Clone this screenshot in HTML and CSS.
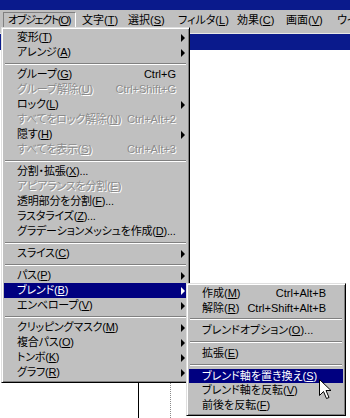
FILE: index.html
```html
<!DOCTYPE html>
<html lang="ja">
<head>
<meta charset="utf-8">
<title>Illustrator メニュー</title>
<link rel="stylesheet" href="styles.css">
</head>
<body>
<div class="app">
  <div class="titlebar"></div>
  <div class="menubar">
    <div class="mb-item open w-obj">オブジェクト(<u>O</u>)</div>
    <div class="mb-item w-txt">文字(<u>T</u>)</div>
    <div class="mb-item w-sel">選択(<u>S</u>)</div>
    <div class="mb-item w-fil">フィルタ(<u>L</u>)</div>
    <div class="mb-item w-eff">効果(<u>C</u>)</div>
    <div class="mb-item w-view">画面(<u>V</u>)</div>
    <div class="mb-item w-win">ウイ</div>
  </div>
  <div class="workspace">
    <div class="doc-title"></div>
    <div class="canvas">
      <div class="art-line"></div>
      <div class="page-line"></div>
    </div>
  </div>
</div>

<div class="menu main-menu">
  <div class="mi"><span>変形(<u>T</u>)</span><span class="arrow"></span></div>
  <div class="mi"><span>アレンジ(<u>A</u>)</span><span class="arrow"></span></div>
  <div class="sep"></div>
  <div class="mi"><span>グループ(<u>G</u>)</span><span class="sc">Ctrl+G</span></div>
  <div class="mi disabled"><span>グループ解除(<u>U</u>)</span><span class="sc">Ctrl+Shift+G</span></div>
  <div class="mi"><span>ロック(<u>L</u>)</span><span class="arrow"></span></div>
  <div class="mi disabled"><span>すべてをロック解除(<u>N</u>)</span><span class="sc">Ctrl+Alt+2</span></div>
  <div class="mi"><span>隠す(<u>H</u>)</span><span class="arrow"></span></div>
  <div class="mi disabled"><span>すべてを表示(<u>S</u>)</span><span class="sc">Ctrl+Alt+3</span></div>
  <div class="sep"></div>
  <div class="mi"><span>分割・拡張(<u>X</u>)...</span></div>
  <div class="mi disabled"><span>アピアランスを分割(<u>E</u>)</span></div>
  <div class="mi"><span>透明部分を分割(<u>F</u>)...</span></div>
  <div class="mi"><span>ラスタライズ(<u>Z</u>)...</span></div>
  <div class="mi"><span>グラデーションメッシュを作成(<u>D</u>)...</span></div>
  <div class="sep"></div>
  <div class="mi"><span>スライス(<u>C</u>)</span><span class="arrow"></span></div>
  <div class="sep"></div>
  <div class="mi"><span>パス(<u>P</u>)</span><span class="arrow"></span></div>
  <div class="mi active"><span>ブレンド(<u>B</u>)</span><span class="arrow"></span></div>
  <div class="mi"><span>エンベロープ(<u>V</u>)</span><span class="arrow"></span></div>
  <div class="sep"></div>
  <div class="mi"><span>クリッピングマスク(<u>M</u>)</span><span class="arrow"></span></div>
  <div class="mi"><span>複合パス(<u>O</u>)</span><span class="arrow"></span></div>
  <div class="mi"><span>トンボ(<u>K</u>)</span><span class="arrow"></span></div>
  <div class="mi"><span>グラフ(<u>R</u>)</span><span class="arrow"></span></div>
</div>

<div class="menu sub-menu">
  <div class="mi"><span>作成(<u>M</u>)</span><span class="sc">Ctrl+Alt+B</span></div>
  <div class="mi"><span>解除(<u>R</u>)</span><span class="sc">Ctrl+Shift+Alt+B</span></div>
  <div class="sep"></div>
  <div class="mi"><span>ブレンドオプション(<u>O</u>)...</span></div>
  <div class="sep"></div>
  <div class="mi"><span>拡張(<u>E</u>)</span></div>
  <div class="sep"></div>
  <div class="mi active"><span>ブレンド軸を置き換え(<u>S</u>)</span></div>
  <div class="mi"><span>ブレンド軸を反転(<u>V</u>)</span></div>
  <div class="mi"><span>前後を反転(<u>F</u>)</span></div>
</div>

<svg class="cursor" width="13" height="21" viewBox="0 0 13 21">
  <path d="M0.5 0.5 L0.5 16.5 L4.5 12.5 L7.5 19.5 L10 18.5 L7 11.5 L12 11.5 Z" fill="#fff" stroke="#000" stroke-width="1"/>
</svg>
</body>
</html>
```

FILE: styles.css
```css
body {
  margin: 0;
  width: 350px;
  height: 418px;
  overflow: hidden;
  position: relative;
  background: #fff;
  font-family: "Liberation Sans", "Noto Sans CJK JP", sans-serif;
  font-size: 11px;
  font-feature-settings: "palt";
  color: #000;
}

.app {
  display: flex;
  flex-direction: column;
  height: 418px;
}

.titlebar {
  height: 10px;
  background: #0a1a8c;
}

.menubar {
  height: 23px;
  box-sizing: border-box;
  background: #c0c0c0;
  display: flex;
  align-items: flex-start;
  padding: 2px 0 0 3px;
  white-space: nowrap;
  overflow: hidden;
}

.mb-item {
  flex: none;
  height: 17px;
  box-sizing: border-box;
  line-height: 15px;
  padding: 0 0 0 5px;
  border: 1px solid transparent;
}

.mb-item.open {
  border-color: #808080 #fff #fff #808080;
}

.w-obj { width: 73px; padding-left: 4px; letter-spacing: -1.3px; }
.w-txt { width: 46px; }
.w-sel { width: 50px; }
.w-fil { width: 59px; }
.w-eff { width: 49px; }
.w-view { width: 51px; }
.w-win { width: 19px; padding-right: 0; }

.workspace {
  flex: 1;
  display: flex;
  flex-direction: column;
  background: #fff;
}

.doc-title {
  height: 16px;
  background: #0a1a8c;
  border-top: 1px solid #e8e8e8;
}

.canvas {
  flex: 1;
  position: relative;
  background: #fff;
}

.art-line {
  position: absolute;
  left: 138px;
  top: 40px;
  bottom: 0;
  width: 1px;
  background: #000;
}

.page-line {
  position: absolute;
  left: 170px;
  top: 40px;
  bottom: 0;
  border-left: 1px dotted #8a8a8a;
}

.menu {
  position: absolute;
  box-sizing: border-box;
  background: #c0c0c0;
  border: 1px solid;
  border-color: #dfdfdf #000 #000 #dfdfdf;
  box-shadow: inset 1px 1px 0 #fff, inset -1px -1px 0 #808080;
  padding: 2px;
}

.main-menu {
  left: 1px;
  top: 27px;
  width: 189px;
  z-index: 2;
}

.sub-menu {
  left: 186px;
  top: 283px;
  width: 160px;
  z-index: 3;
}

.mi {
  display: flex;
  align-items: center;
  height: 14.7px;
  line-height: 14.7px;
  padding: 0 11px 0 13px;
  white-space: nowrap;
}

.main-menu .mi {
  height: 15px;
  line-height: 15px;
  letter-spacing: -0.2px;
}

.sub-menu .mi {
  padding-right: 17px;
}

.mi .sc {
  margin-left: auto;
  letter-spacing: 0;
}

.mi .arrow {
  margin-left: auto;
  margin-right: -9px;
  width: 0;
  height: 0;
  border-left: 4px solid #000;
  border-top: 4px solid transparent;
  border-bottom: 4px solid transparent;
}

.mi.active {
  background: #000080;
  color: #fff;
}

.mi.active .arrow {
  border-left-color: #fff;
}

.mi.disabled {
  color: #8c8c8c;
  text-shadow: 1px 1px 0 #fff;
}

.sep {
  height: 0;
  border-top: 1px solid #808080;
  border-bottom: 1px solid #fff;
  margin: 2.5px 1px;
}

.sub-menu .sep {
  margin: 3px 1px;
}

.cursor {
  position: absolute;
  left: 319px;
  top: 379px;
  z-index: 4;
}
```
